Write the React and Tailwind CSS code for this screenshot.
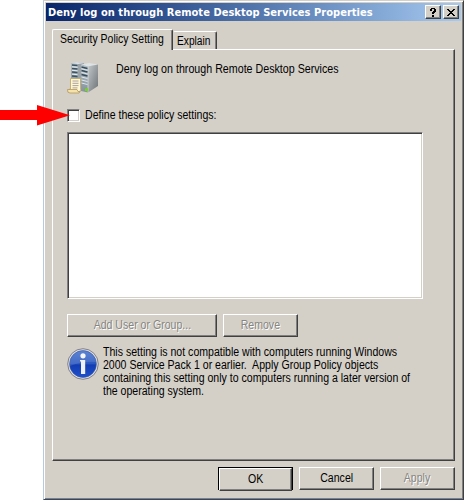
import React from 'react';

const raised = 'border border-t-white border-l-white border-r-[#404040] border-b-[#404040] shadow-[inset_-1px_-1px_0_#808080]';

function Button({ children, className = '', disabled = false }) {
  return (
    <button
      type="button"
      className={`flex h-[23px] items-center justify-center whitespace-nowrap bg-[#d4d0c8] text-[12px] leading-[13px] ${raised} ${disabled ? 'text-[#87857f] [text-shadow:1px_1px_0_#fff]' : 'text-black'} ${className}`}
    >
      <span className="inline-block scale-x-[.88]">{children}</span>
    </button>
  );
}

function TitleButton({ children }) {
  return (
    <button type="button" className={`flex h-[14px] w-4 items-center justify-center bg-[#d4d0c8] ${raised}`}>
      {children}
    </button>
  );
}

function ServerIcon() {
  return (
    <svg width="32" height="32" viewBox="0 0 32 32" className="shrink-0">
      <defs>
        <linearGradient id="side" x1="0" x2="1" y1="0" y2="1">
          <stop offset="0" stopColor="#c3c7c9" />
          <stop offset=".5" stopColor="#979da1" />
          <stop offset="1" stopColor="#6d7377" />
        </linearGradient>
        <linearGradient id="front" x1="0" x2="0" y1="0" y2="1">
          <stop offset="0" stopColor="#b3bfc7" />
          <stop offset="1" stopColor="#84929b" />
        </linearGradient>
      </defs>
      <path d="M4 1 12 0 17 1V20L11 24 4 22Z" fill="url(#front)" />
      <path d="M11 1.5 17 1V21L11 23Z" fill="#9ba3a8" />
      <path d="M4 1 10 0.3 17 1 11 2Z" fill="#dfe4e7" />
      <path d="M5 3 10.5 3.5M5 6.5 10.5 7M5 10 10.5 10.5M5 14 10.5 14.5" stroke="#3f5261" strokeWidth="1.3" />
      <path d="M5 4.8 10.5 5.3M5 8.3 10.5 8.8M5 12.2 10.5 12.7" stroke="#e6edf0" />
      <path d="M14 2.5 22 1 31 2.5 21 4.5Z" fill="#dde2e4" />
      <path d="M14 2.5 21 4.5V30.5L14 29Z" fill="url(#front)" />
      <path d="M21 4.5 31 2.5V24L21 30.5Z" fill="url(#side)" />
      <path d="M21 4.5V30.5" stroke="#e3e6e7" strokeWidth=".6" />
      <path d="M14.5 5 20.5 6.5M14.5 8.5 20.5 10M14.5 12.5 20.5 14" stroke="#374b5a" strokeWidth="1.3" />
      <path d="M14.5 6.8 20.5 8.3M14.5 10.5 20.5 12M14.5 15 20.5 16.5M14.5 18 20.5 19.5M14.5 21 20.5 22.5" stroke="#dfe6ea" />
      <circle cx="19.5" cy="27.7" r="1.6" fill="#74d81a" />
      <path d="M3.5 16.5H13.5V27.5L13 30H2.5V27H3.5Z" fill="#fff6d2" stroke="#bda468" strokeWidth=".8" />
      <path d="M0.5 27.5H10Q10.5 30.5 13 29.5L12 31H3Q0 31 .5 27.5Z" fill="#f5e2a8" stroke="#b3975a" strokeWidth=".8" />
      <path d="M5.5 19H11.5M5.5 21.3H11.5M5.5 23.6H11.5M5.5 25.9H10.5" stroke="#a2979a" strokeWidth=".9" />
    </svg>
  );
}

function InfoIcon() {
  return (
    <svg width="32" height="32" viewBox="0 0 32 32" className="shrink-0">
      <defs>
        <linearGradient id="blue" x1="0" x2="0" y1="0" y2="1">
          <stop offset="0" stopColor="#4472cc" />
          <stop offset=".48" stopColor="#2c58c0" />
          <stop offset=".54" stopColor="#123cb2" />
          <stop offset="1" stopColor="#2050cc" />
        </linearGradient>
      </defs>
      <circle cx="16" cy="16" r="15.3" fill="#dcdde2" stroke="#808086" strokeWidth="1" />
      <circle cx="16" cy="16" r="13.4" fill="url(#blue)" stroke="#3458a4" strokeWidth=".6" />
      <path d="M3 18A13 13 0 0 1 29 14Q16 13 3 18Z" fill="#fff" opacity=".12" />
      <circle cx="16" cy="7.8" r="2.6" fill="#f6f6f6" />
      <path d="M13 12H18.2V26H14V13.5H13Z" fill="#f0f0f0" />
    </svg>
  );
}

export default function App() {
  return (
    <div className="relative flex h-[500px] w-[464px] overflow-hidden bg-white pl-[43px] font-['Liberation_Sans',Arial,sans-serif] text-[12px] leading-[13px] text-black">
      <main className="flex h-[500px] w-[421px] flex-col border border-t-[#d4d0c8] border-r-[#404040] border-b-[#344766] border-l-[#b6cbe2] bg-[#d4d0c8] shadow-[inset_1px_1px_0_#fff,inset_-1px_-1px_0_#808080]">
        <header className="mt-[2px] ml-[2px] flex h-[18px] w-[415px] shrink-0 items-center bg-linear-to-r from-[#0a246a] to-[#a6caf0] pr-[2px] pl-[2px]">
          <h1 className="grow whitespace-nowrap font-['DejaVu_Sans_Condensed','DejaVu_Sans',sans-serif] text-[11px] font-bold tracking-[0.04px] text-white">
            Deny log on through Remote Desktop Services Properties
          </h1>
          <div className="flex gap-[2px]">
            <TitleButton>
              <svg width="8" height="9" viewBox="0 0 8 9" shapeRendering="crispEdges">
                <path d="M2 0H6V1H7V4H6V5H5V6H3V4H4V3H5V1H3V3H1V1H2ZM3 7H5V9H3Z" fill="#000" />
              </svg>
            </TitleButton>
            <TitleButton>
              <svg width="8" height="7" viewBox="0 0 8 7" shapeRendering="crispEdges">
                <path d="M0 0H2V1H3V2H5V1H6V0H8V1H7V2H6V3H5V4H6V5H7V6H8V7H6V6H5V5H3V6H2V7H0V6H1V5H2V4H3V3H2V2H1V1H0Z" fill="#000" />
              </svg>
            </TitleButton>
          </div>
        </header>

        <nav className="mt-[8px] ml-[8px] flex h-[20px] shrink-0 items-end">
          <div className="z-10 mb-[-1px] flex h-[21px] w-[121px] rounded-t-[2px] border border-b-0 border-t-white border-r-[#404040] border-l-white bg-[#d4d0c8] pt-[3px] pl-[7px] shadow-[inset_-1px_0_0_#808080]">
            <span className="origin-left scale-x-[.87] whitespace-nowrap">Security Policy Setting</span>
          </div>
          <div className="flex h-[18px] w-[44px] rounded-t-[2px] border border-b-0 border-t-white border-r-[#404040] border-l-transparent pt-[3px] pl-[3px] shadow-[inset_-1px_0_0_#808080]">
            <span className="origin-left scale-x-[.85]">Explain</span>
          </div>
        </nav>

        <section className="ml-[8px] flex h-[412px] w-[403px] shrink-0 flex-col border border-t-white border-r-[#404040] border-b-[#404040] border-l-white pl-[14px] shadow-[inset_-1px_-1px_0_#808080]">
          <div className="mt-[12px] flex h-8">
            <ServerIcon />
            <p className="mt-[1px] ml-[17px] h-[13px] origin-left scale-x-[.89] whitespace-nowrap">Deny log on through Remote Desktop Services</p>
          </div>
          <div className="mt-[15px] flex h-[13px] items-center">
            <span className="size-[13px] border border-t-[#808080] border-r-white border-b-white border-l-[#808080] bg-white shadow-[inset_1px_1px_0_#404040,inset_-1px_-1px_0_#d4d0c8]" />
            <span className="ml-[5px] origin-left scale-x-[.88] whitespace-nowrap">Define these policy settings:</span>
          </div>
          <div className="mt-[10px] h-[167px] w-[356px] border border-t-[#808080] border-r-white border-b-white border-l-[#808080] bg-white shadow-[inset_1px_1px_0_#404040,inset_-1px_-1px_0_#d4d0c8]" />
          <div className="mt-[15px] flex gap-[6px]">
            <Button disabled className="w-[150px]">Add User or Group...</Button>
            <Button disabled className="w-[75px]">Remove</Button>
          </div>
          <div className="mt-[11px] flex">
            <InfoIcon />
            <p className="mt-[-2px] ml-[4px] origin-left scale-x-[.88] whitespace-pre">
              <span className="block">This setting is not compatible with computers running Windows</span>
              <span className="block">{'2000 Service Pack 1 or earlier.  Apply Group Policy objects'}</span>
              <span className="block">containing this setting only to computers running a later version of</span>
              <span className="block">the operating system.</span>
            </p>
          </div>
        </section>

        <footer className="mt-[6px] mr-[8px] flex justify-end gap-[6px]">
          <div className="flex h-[23px] w-[75px] border border-black">
            <Button className="h-[21px] w-[73px]">OK</Button>
          </div>
          <Button className="w-[75px]">Cancel</Button>
          <Button disabled className="w-[75px]">Apply</Button>
        </footer>
      </main>

      <svg className="absolute top-[105px] left-0" width="71" height="21" viewBox="0 0 71 21">
        <path d="M0 5H37V0L70 10.2 37 20.5V15H0Z" fill="#f00" />
      </svg>
    </div>
  );
}
